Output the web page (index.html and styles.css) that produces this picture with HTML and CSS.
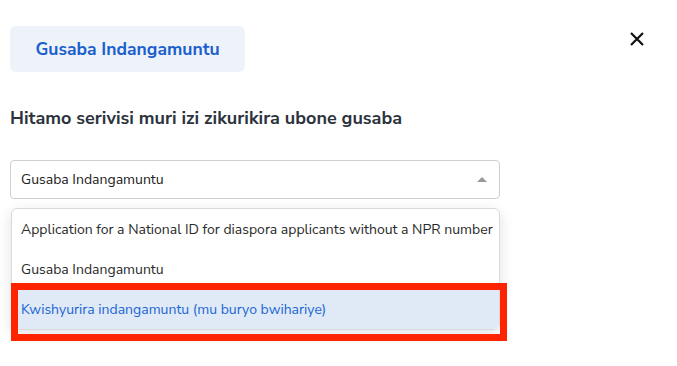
FILE: index.html
```html
<!DOCTYPE html>
<html lang="rw">

<head>
    <meta charset="UTF-8">
    <meta name="viewport" content="width=device-width, initial-scale=1.0">
    <title>Gusaba Indangamuntu</title>
    <link rel="stylesheet" href="styles.css">
</head>

<body>
    <div class="modal">
        <div class="modal-header">
            <button class="tab-btn">Gusaba Indangamuntu</button>
            <button class="close-btn" aria-label="Close">
                <svg width="14" height="14" viewBox="0 0 14 14">
                    <path d="M1 1 L13 13 M13 1 L1 13" stroke="#111" stroke-width="2.2" fill="none" />
                </svg>
            </button>
        </div>

        <h2 class="title">Hitamo serivisi muri izi zikurikira ubone gusaba</h2>

        <div class="select-wrap">
            <div class="select">
                <span>Gusaba Indangamuntu</span>
                <span class="arrow"></span>
            </div>
            <div class="options">
                <div class="option">Application for a National ID for diaspora applicants without a NPR number</div>
                <div class="option">Gusaba Indangamuntu</div>
                <div class="option active">Kwishyurira indangamuntu (mu buryo bwihariye)</div>
                <span class="mark"></span>
            </div>
        </div>
    </div>
</body>

</html>
```

FILE: styles.css
```css
body {
    margin: 0;
    background: #fff;
    font-family: "Nunito Sans", "Lato", "Open Sans", sans-serif;
    color: #333;
}

.modal {
    padding: 26px 10px 40px 10px;
}

.modal-header {
    display: flex;
    justify-content: space-between;
    align-items: flex-start;
}

.tab-btn {
    width: 235px;
    height: 46px;
    border: none;
    border-radius: 6px;
    background: #eef3fa;
    color: #1b5fce;
    font-family: inherit;
    font-size: 17.5px;
    font-weight: 700;
    cursor: pointer;
}

.close-btn {
    border: none;
    background: none;
    padding: 0;
    margin: 6px 23px 0 0;
    width: 14px;
    height: 14px;
    cursor: pointer;
    display: flex;
}

.title {
    margin: 34px 0 0 0;
    font-size: 18px;
    font-weight: 700;
    color: #2d333d;
}

.select-wrap {
    width: 490px;
    margin-top: 30px;
}

.select {
    height: 39px;
    box-sizing: border-box;
    border: 1px solid #cfcfcf;
    border-radius: 4px;
    display: flex;
    align-items: center;
    justify-content: space-between;
    padding: 0 11px 0 10px;
    font-size: 14px;
    color: #222;
}

.arrow {
    width: 0;
    height: 0;
    border-left: 5px solid transparent;
    border-right: 5px solid transparent;
    border-bottom: 5px solid #999;
    margin-right: 1px;
}

.options {
    margin: 9px 0 0 1px;
    border: 1px solid #d9d9d9;
    border-radius: 6px;
    box-shadow: 0 4px 14px rgba(0, 0, 0, 0.12);
    position: relative;
}

.option {
    height: 40px;
    display: flex;
    align-items: center;
    padding: 0 6px 0 9px;
    font-size: 14px;
    color: #2a2a2a;
    white-space: nowrap;
}

.option.active {
    background: #dfeaf6;
    color: #1c66d4;
    border-radius: 0 0 6px 6px;
}

.mark {
    position: absolute;
    left: -1px;
    right: -8px;
    top: 74px;
    bottom: -12px;
    border: 7px solid #ff2400;
}
```
